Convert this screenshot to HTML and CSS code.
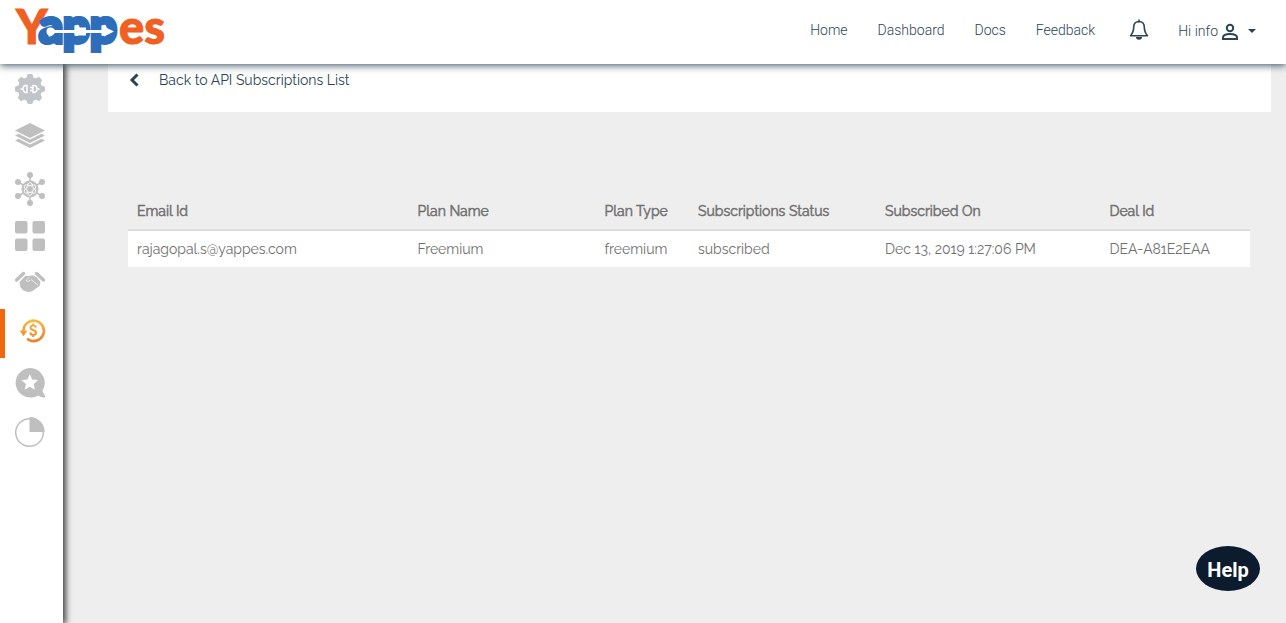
FILE: index.html
```html
<!DOCTYPE html>
<html lang="en">
<head>
<meta charset="utf-8">
<meta name="viewport" content="width=device-width, initial-scale=1">
<title>Yappes - API Subscriptions</title>
<link rel="stylesheet" href="styles.css">
</head>
<body>
<header class="topbar">
  <a class="brand" href="#" aria-label="Yappes">
    <svg class="logo" width="152" height="60" viewBox="0 0 152 60">
      <text class="logo-orange" x="1" y="44" font-size="48">Y</text>
      <text class="logo-blue" x="24" y="43" font-size="47">app</text>
      <text class="logo-orange" x="104" y="44" font-size="47">es</text>
      <path fill="#fff" d="M35.500 27.500c2 0 3.700 1 4.300 2.500H61v-2.500h10V30h18v-3.500l10 5-10 5V33H71v2.500H61V33H39.800c-.6 1.500-2.300 2.500-4.300 2.500a4 4 0 0 1 0-8z"/>
    </svg>
  </a>
  <nav class="topnav">
    <a href="#">Home</a>
    <a href="#">Dashboard</a>
    <a href="#">Docs</a>
    <a href="#">Feedback</a>
  </nav>
  <button class="bell" type="button" aria-label="Notifications">
    <svg width="20" height="22" viewBox="0 0 20 22"><path d="M10 2.500C6.500 2.500 4.700 5 4.700 8c0 4.500-1.200 6.500-3.200 8.700h17c-2-2.200-3.200-4.200-3.200-8.700 0-3-1.800-5.500-5.300-5.500zM10 1v2" fill="none" stroke="#2b4557" stroke-width="1.600" stroke-linejoin="round" stroke-linecap="round"/><path d="M7 18h6a3 2.700 0 0 1-6 0z" fill="#2b4557"/></svg>
  </button>
  <button class="user" type="button">
    <span>Hi info</span>
    <svg width="18" height="18" viewBox="0 0 18 18" fill="none" stroke="#2b4557" stroke-width="2"><circle cx="9" cy="6" r="3.200"/><path d="M2 17v-1.500C2 13 6 12 9 12s7 1 7 3.500V17z"/></svg>
    <svg class="caret" width="8" height="4" viewBox="0 0 8 4"><path d="M0 0h8L4 4z" fill="#2b4557"/></svg>
  </button>
</header>
<div class="shell">
  <nav class="sidebar" aria-label="Sections">
    <a href="#" aria-label="API settings"><svg viewBox="0 0 60 49">
      <g fill="#c1c5ca"><circle cx="30" cy="25" r="12"/>
      <path id="teeth" d="M26.500 14l.8-3q.3-1 1.200-1h3q.900 0 1.200 1l.8 3v22l-.8 3q-.3 1-1.200 1h-3q-.9 0-1.200-1l-.8-3z"/><use href="#teeth" transform="rotate(45 30 25)"/><use href="#teeth" transform="rotate(90 30 25)"/><use href="#teeth" transform="rotate(135 30 25)"/></g>
      <path d="M20.500 25H23M27 21.500h-1a3 3.500 0 0 0 0 7h1zM33 21.500h1a3 3.500 0 0 1 0 7h-1zM37 25h2.500M30 23.500h3M30 26.500h3" fill="none" stroke="#fff" stroke-width="1.400"/></svg></a>
    <a href="#" aria-label="Layers"><svg viewBox="0 0 60 49" fill="#bfbfbf"><path d="M30 10l15 7.500L30 25l-15-7.500z"/><path d="M18.500 20.800L15 22.500 30 30l15-7.500-3.500-1.700L30 26.500zM18.500 25.800L15 27.500 30 35l15-7.500-3.500-1.700L30 31.500z"/></svg></a>
    <a href="#" aria-label="Network"><svg viewBox="0 0 60 49"><path d="M30 13v28M18 20l24 14M42 20L18 34" stroke="#bfbfbf" stroke-width="1.500"/><circle cx="30" cy="27" r="8.500" fill="#bfbfbf"/><g fill="none" stroke="#fff" stroke-width=".8"><ellipse cx="30" cy="27" rx="3" ry="6.500"/><ellipse cx="30" cy="27" rx="3" ry="6.500" transform="rotate(60 30 27)"/><ellipse cx="30" cy="27" rx="3" ry="6.500" transform="rotate(120 30 27)"/></g><g fill="#bfbfbf"><circle cx="30" cy="27" r="2.800"/><circle cx="30" cy="13" r="3"/><circle cx="30" cy="41" r="3"/><circle cx="18" cy="20" r="3"/><circle cx="42" cy="20" r="3"/><circle cx="18" cy="34" r="3"/><circle cx="42" cy="34" r="3"/></g></svg></a>
    <a href="#" aria-label="Apps"><svg viewBox="0 0 60 49" fill="#bfbfbf"><rect x="15" y="10" width="12.500" height="12.500" rx="2"/><rect x="32.500" y="10" width="12.500" height="12.500" rx="2"/><rect x="15" y="27.500" width="12.500" height="12.500" rx="2"/><rect x="32.500" y="27.500" width="12.500" height="12.500" rx="2"/></svg></a>
    <a href="#" aria-label="Deals"><svg viewBox="0 0 60 49"><path d="M16.500 20l7-6.500M43.500 20l-7-6.500" stroke="#bfbfbf" stroke-width="3.400" stroke-linecap="round"/><path fill="#bfbfbf" d="M19.500 22l6-6.300 4 .3 3-.8 4 1.800 4 5-1 4-7 5-4 1.200-5-1.700-3-3z"/><path d="M29.500 17L26 20.500c1.500 1.500 4 .5 5-1l7 5.500" fill="none" stroke="#fff" stroke-width=".7"/></svg></a>
    <a class="active" href="#" aria-label="Subscriptions" aria-current="page"><svg viewBox="0 0 60 49"><defs><linearGradient id="gold" gradientUnits="userSpaceOnUse" x1="0" y1="11" x2="0" y2="34"><stop offset="0" stop-color="#f7bc45"/><stop offset="1" stop-color="#ee7b24"/></linearGradient></defs><path d="M23.500 21A10.200 10.200 0 1 1 28 30.300" fill="none" stroke="url(#gold)" stroke-width="2.700" stroke-linecap="round"/><path d="M20.500 22h6L23.500 26.500z" fill="url(#gold)" stroke="url(#gold)" stroke-linejoin="round"/><path d="M36 18.500c-.4-1.400-1.400-2-2.700-2-3.500 0-3.800 3.700-.5 4.400 4.500.9 4 5 .5 5-1.700 0-2.800-.8-3.100-2.400M33.200 14.500v2M33.200 26v2" fill="none" stroke="url(#gold)" stroke-width="2"/></svg></a>
    <a href="#" aria-label="Reviews"><svg viewBox="0 0 60 49"><path d="M30 10a14.800 14.800 0 0 1 12.500 22.500c.5 2 1.300 3.500 2.500 5v2c-2.500 0-5-.5-7-2A14.800 14.800 0 1 1 30 10z" fill="#bfbfbf"/><path d="M29.800 16l2.400 5.400 5.800.6-4.300 4 1.200 5.700-5.100-2.900-5.100 2.900 1.200-5.700-4.300-4 5.800-.6z" fill="#fff"/></svg></a>
    <a href="#" aria-label="Reports"><svg viewBox="0 0 60 49"><circle cx="29.500" cy="25.500" r="13.800" fill="#fff" stroke="#bfbfbf" stroke-width="1.500"/><path d="M29.500 25V10A15 15 0 0 1 44.700 25z" fill="#bfbfbf"/></svg></a>
  </nav>
  <main class="content">
    <div class="backbar">
      <a class="back" href="#"><svg width="10" height="14" viewBox="0 0 10 14"><path d="M8.500 1.500L3 7l5.500 5.500" fill="none" stroke="#2b4557" stroke-width="3"/></svg><span>Back to API Subscriptions List</span></a>
    </div>
    <table class="subs">
      <colgroup><col class="c-email"><col class="c-mid"><col class="c-type"><col class="c-mid"><col class="c-date"><col></colgroup>
      <thead><tr><th scope="col">Email Id</th><th scope="col">Plan Name</th><th scope="col">Plan Type</th><th scope="col">Subscriptions Status</th><th scope="col">Subscribed On</th><th scope="col">Deal Id</th></tr></thead>
      <tbody><tr><td>rajagopal.s@yappes.com</td><td>Freemium</td><td>freemium</td><td>subscribed</td><td>Dec 13, 2019 1:27:06 PM</td><td>DEA-A81E2EAA</td></tr></tbody>
    </table>
  </main>
</div>
<button class="help" type="button">Help</button>
</body>
</html>
```
FILE: styles.css
```css
* { box-sizing: border-box; }
body {
  margin: 0;
  min-height: 100vh;
  display: flex;
  flex-direction: column;
  background: #eee;
  color: #707070;
  font: 14px/20px Raleway, Lato, sans-serif;
}
a { color: inherit; text-decoration: none; }
button { border: 0; padding: 0; background: none; color: inherit; font: inherit; cursor: pointer; }
svg { display: block; }

.topbar {
  position: sticky;
  top: 0;
  z-index: 2;
  display: flex;
  align-items: center;
  height: 64px;
  padding: 0 30px 4px 15px;
  background: #fff;
  box-shadow: 0 1px 8px #2b4557;
  color: #2b4557;
  font: 300 14px/20px Roboto, sans-serif;
}
.brand { margin-right: auto; }
.logo { overflow: visible; font-family: Lato, sans-serif; font-weight: 900; }
.logo-orange { fill: #f15f22; stroke: #f15f22; stroke-width: 1px; }
.logo-blue { fill: #2e6dba; stroke: #2e6dba; stroke-width: 4px; }
.topnav { display: flex; gap: 30px; }
.bell { margin: 0 29px 0 34px; }
.user { display: flex; align-items: center; gap: 3px; padding-top: 2px; }
.caret { margin-left: 6px; }

.shell { flex: 1; display: flex; }
.sidebar {
  z-index: 1;
  width: 63px;
  flex: none;
  background: #fff;
  box-shadow: 2px 0 6px 1px #444;
}
.sidebar a { display: block; height: 49px; }
.sidebar svg { width: 60px; height: 49px; }
.sidebar .active { border-left: 5px solid #f2680f; }
.sidebar .active svg { margin-left: -5px; }

.content { flex: 1; min-width: 0; padding: 0 15px 0 45px; }
.backbar { height: 48px; padding: 6px 21px; background: #fff; }
.back { display: inline-flex; align-items: center; gap: 20px; color: #2b4557; }
.subs {
  width: calc(100% - 41px);
  margin: 79px 21px 0 20px;
  border-collapse: separate;
  border-spacing: 0;
  table-layout: fixed;
}
.c-email { width: 25%; }
.c-mid { width: 16.667%; }
.c-type { width: 8.333%; }
.c-date { width: 20%; }
th, td { padding: 8px 9px; text-align: left; white-space: nowrap; }
th {
  padding-top: 10px;
  border-bottom: 2px solid #ddd;
  font-weight: 400;
  -webkit-text-stroke: 0.5px currentColor;
}
td { background: #fff; }

.help {
  position: fixed;
  right: 26px;
  bottom: 32px;
  width: 64px;
  height: 45px;
  padding-top: 2px;
  border-radius: 50%;
  background: #0c1b2d;
  color: #fff;
  font: 700 20px/24px Roboto, sans-serif;
}
```
